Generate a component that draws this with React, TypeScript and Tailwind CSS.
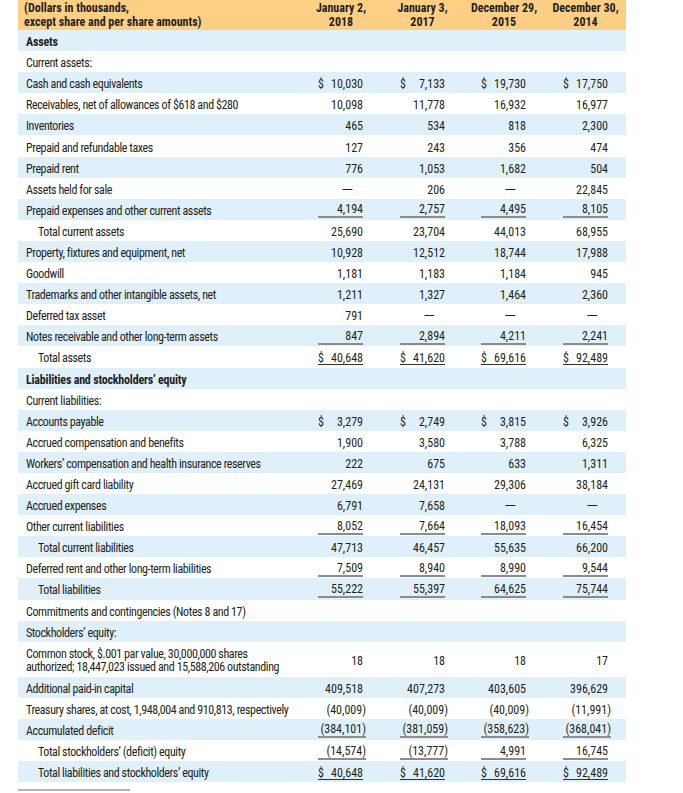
import React from "react";

type Kind = "sub" | "total" | undefined;
type Row = {
  label: React.ReactNode;
  indent?: boolean;
  bold?: boolean;
  vals?: string[];
  dollar?: boolean;
  kind?: Kind;
  tall?: boolean;
};

const rows: Row[] = [
  { label: "Assets", bold: true },
  { label: "Current assets:" },
  { label: "Cash and cash equivalents", vals: ["10,030", "7,133", "19,730", "17,750"], dollar: true },
  { label: "Receivables, net of allowances of $618 and $280", vals: ["10,098", "11,778", "16,932", "16,977"] },
  { label: "Inventories", vals: ["465", "534", "818", "2,300"] },
  { label: "Prepaid and refundable taxes", vals: ["127", "243", "356", "474"] },
  { label: "Prepaid rent", vals: ["776", "1,053", "1,682", "504"] },
  { label: "Assets held for sale", vals: ["—", "206", "—", "22,845"] },
  { label: "Prepaid expenses and other current assets", vals: ["4,194", "2,757", "4,495", "8,105"], kind: "sub" },
  { label: "Total current assets", indent: true, vals: ["25,690", "23,704", "44,013", "68,955"] },
  { label: "Property, fixtures and equipment, net", vals: ["10,928", "12,512", "18,744", "17,988"] },
  { label: "Goodwill", vals: ["1,181", "1,183", "1,184", "945"] },
  { label: "Trademarks and other intangible assets, net", vals: ["1,211", "1,327", "1,464", "2,360"] },
  { label: "Deferred tax asset", vals: ["791", "—", "—", "—"] },
  { label: "Notes receivable and other long-term assets", vals: ["847", "2,894", "4,211", "2,241"], kind: "sub" },
  { label: "Total assets", indent: true, vals: ["40,648", "41,620", "69,616", "92,489"], dollar: true, kind: "total" },
  { label: "Liabilities and stockholders’ equity", bold: true },
  { label: "Current liabilities:" },
  { label: "Accounts payable", vals: ["3,279", "2,749", "3,815", "3,926"], dollar: true },
  { label: "Accrued compensation and benefits", vals: ["1,900", "3,580", "3,788", "6,325"] },
  { label: "Workers’ compensation and health insurance reserves", vals: ["222", "675", "633", "1,311"] },
  { label: "Accrued gift card liability", vals: ["27,469", "24,131", "29,306", "38,184"] },
  { label: "Accrued expenses", vals: ["6,791", "7,658", "—", "—"] },
  { label: "Other current liabilities", vals: ["8,052", "7,664", "18,093", "16,454"], kind: "sub" },
  { label: "Total current liabilities", indent: true, vals: ["47,713", "46,457", "55,635", "66,200"] },
  { label: "Deferred rent and other long-term liabilities", vals: ["7,509", "8,940", "8,990", "9,544"], kind: "sub" },
  { label: "Total liabilities", indent: true, vals: ["55,222", "55,397", "64,625", "75,744"], kind: "sub" },
  { label: "Commitments and contingencies (Notes 8 and 17)" },
  { label: "Stockholders’ equity:" },
  {
    label: (
      <>
        Common stock, $.001 par value, 30,000,000 shares
        <br />
        authorized; 18,447,023 issued and 15,588,206 outstanding
      </>
    ),
    vals: ["18", "18", "18", "17"],
    tall: true,
  },
  { label: "Additional paid-in capital", vals: ["409,518", "407,273", "403,605", "396,629"] },
  { label: "Treasury shares, at cost, 1,948,004 and 910,813, respectively", vals: ["(40,009)", "(40,009)", "(40,009)", "(11,991)"] },
  { label: "Accumulated deficit", vals: ["(384,101)", "(381,059)", "(358,623)", "(368,041)"], kind: "sub" },
  { label: "Total stockholders’ (deficit) equity", indent: true, vals: ["(14,574)", "(13,777)", "4,991", "16,745"], kind: "sub" },
  { label: "Total liabilities and stockholders’ equity", indent: true, vals: ["40,648", "41,620", "69,616", "92,489"], dollar: true, kind: "total" },
];

function Val({ v, dollar, kind }: { v: string; dollar?: boolean; kind: Kind }) {
  const neg = v.startsWith("(");
  const dash = v === "—";
  const border =
    kind === "sub"
      ? "border-b-2 border-[#8c8c8c] leading-[13px]"
      : kind === "total"
      ? "border-b-[1.5px] border-[#333333] leading-[12px]"
      : "leading-[14px]";
  return (
    <div className="pl-[18px] flex items-center">
      <div className={`flex justify-between ${neg ? "w-[48px]" : "w-[45px]"} ${border}`}>
        <span>{dollar ? "$" : ""}</span>
        <span className={dash ? "mr-[12px] scale-x-150" : ""}>{v}</span>
      </div>
    </div>
  );
}

export default function App() {
  const grid = "grid grid-cols-[282px_82px_81px_82px_81px]";
  return (
    <div className="min-h-[793px] bg-white pl-[18px] text-[12px] text-[#231f20] font-['Liberation_Sans_Narrow','Arial_Narrow','Roboto_Condensed',sans-serif]">
      <div className="w-[608px]">
        <div className={`${grid} h-[30px] pt-[1px] bg-[#fdcf85] font-bold leading-[14px]`}>
          <div className="pl-[6px]">
            (Dollars in thousands,
            <br />
            except share and per share amounts)
          </div>
          <div className="text-center">
            January 2,
            <br />
            2018
          </div>
          <div className="text-center">
            January 3,
            <br />
            2017
          </div>
          <div className="text-center">
            December 29,
            <br />
            2015
          </div>
          <div className="text-center">
            December 30,
            <br />
            2014
          </div>
        </div>
        {rows.map((r, i) => (
          <div
            key={i}
            className={`${grid} items-center pt-[3px] ${r.tall ? "h-[35px]" : "h-[21.1px]"} ${
              i % 2 === 0 ? "bg-[#dff0fb]" : "bg-white"
            }`}
          >
            <div
              className={`${r.indent ? "pl-[20px]" : "pl-[8px]"} ${r.bold ? "font-bold tracking-[-0.2px]" : "tracking-[-0.4px]"} ${
                r.tall ? "leading-[13px]" : "leading-[14px]"
              } whitespace-nowrap`}
            >
              {r.label}
            </div>
            {r.vals
              ? r.vals.map((v, j) => <Val key={j} v={v} dollar={r.dollar} kind={r.kind} />)
              : [0, 1, 2, 3].map((j) => <div key={j} />)}
          </div>
        ))}
      </div>
      <div className="mt-[7px] h-[2px] w-[112px] bg-[#b3b3b3]" />
    </div>
  );
}
